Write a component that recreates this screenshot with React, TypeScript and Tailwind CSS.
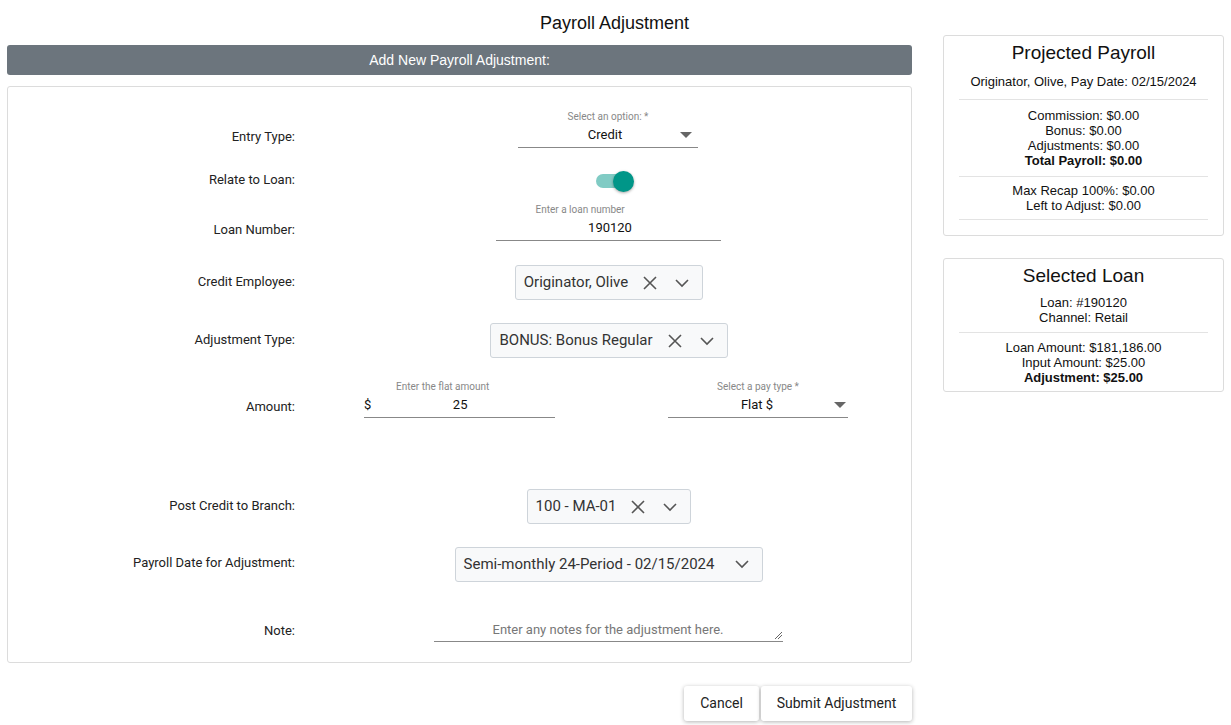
import React from "react";

const X = () => (
  <svg width="16" height="16" viewBox="0 0 16 16" className="shrink-0"><path d="M2 2L14 14M14 2L2 14" stroke="#555" strokeWidth="1.6" /></svg>
);
const Chev = () => (
  <svg width="16" height="16" viewBox="0 0 16 16" className="shrink-0"><path d="M2 5L8 11L14 5" stroke="#555" strokeWidth="1.6" fill="none" /></svg>
);
const Caret = () => (
  <svg width="12" height="6" viewBox="0 0 12 6" className="shrink-0"><path d="M0 0H12L6 6Z" fill="#666" /></svg>
);

function Box({ text, clear = true }: { text: string; clear?: boolean }) {
  return (
    <div className="h-[35px] flex items-center gap-[10px] px-[8px] border border-[#ced4da] rounded-[3px] bg-[#f8f9fa] text-[15px] text-[#333]">
      <span className="mr-[4px]">{text}</span>
      {clear && <X />}
      <span className="ml-[6px] mr-[4px]"><Chev /></span>
    </div>
  );
}

function Row({ label, cls, children, align = "items-center" }: { label: string; cls: string; children: React.ReactNode; align?: string }) {
  return (
    <div className={`flex ${align} ${cls}`}>
      <div className="w-[287px] text-right text-[13px] text-[#222] pb-[2px]">{label}</div>
      <div className="flex-1 ml-[10px] flex justify-center">{children}</div>
    </div>
  );
}

function Line({ children }: { children: React.ReactNode }) {
  return <div className="leading-[15px]">{children}</div>;
}

export default function App() {
  return (
    <div className="w-[1231px] h-[725px] bg-white flex gap-[31px] px-[7px] text-[#111]" style={{ fontFamily: "Roboto, 'Liberation Sans', sans-serif" }}>
      <div className="w-[905px] flex flex-col">
        <div className="h-[45px] flex items-center justify-center pl-[310px] pt-[2px] text-[18px] text-[#111]" style={{ fontFamily: "'Liberation Sans', Arial, sans-serif" }}>
          Payroll Adjustment
        </div>
        <div className="h-[30px] bg-[#6c757d] rounded-[3px] flex items-center justify-center text-white text-[14px]" style={{ fontFamily: "'Liberation Sans', Arial, sans-serif" }}>
          Add New Payroll Adjustment:
        </div>
        <div className="mt-[11px] border border-[#dcdcdc] rounded-[3px] pt-[17px] pb-[20px] flex flex-col">
          <Row label="Entry Type:" cls="h-[44px]" align="items-end">
            <div className="w-[180px] flex flex-col items-center border-b border-[#888]">
              <div className="text-[10px] text-[#888] leading-[13px]">Select an option: *</div>
              <div className="w-full flex items-center h-[24px] pl-[12px] pr-[6px]">
                <span className="flex-1 text-center text-[13px]">Credit</span>
                <Caret />
              </div>
            </div>
          </Row>
          <Row label="Relate to Loan:" cls="h-[44px] mt-[11px]">
            <div className="relative w-[38px] h-[22px] flex items-center ml-[14px]">
              <div className="w-[34px] h-[14px] rounded-full bg-[#80cbc4]" />
              <div className="absolute right-0 w-[21px] h-[21px] rounded-full bg-[#009688] shadow-[0_1px_3px_rgba(0,0,0,0.35)]" />
            </div>
          </Row>
          <Row label="Loan Number:" cls="h-[38px]" align="items-end">
            <div className="w-[225px] flex flex-col border-b border-[#888]">
              <div className="text-[10px] text-[#888] leading-[13px] pl-[40px]">Enter a loan number</div>
              <div className="h-[24px] flex items-center justify-center text-[13px] pl-[4px]">190120</div>
            </div>
          </Row>
          <Row label="Credit Employee:" cls="h-[35px] mt-[24px]">
            <div className="pl-[2px]"><Box text="Originator, Olive" /></div>
          </Row>
          <Row label="Adjustment Type:" cls="h-[35px] mt-[23px]">
            <div className="pl-[2px]"><Box text="BONUS: Bonus Regular" /></div>
          </Row>
          <Row label="Amount:" cls="h-[38px] mt-[22px]" align="items-end">
            <div className="w-full flex justify-between pl-[59px] pr-[63px]">
              <div className="w-[191px] flex flex-col border-b border-[#888]">
                <div className="text-[10px] text-[#888] leading-[13px] pl-[32px]">Enter the flat amount</div>
                <div className="h-[24px] flex items-center text-[13px]">
                  <span>$</span>
                  <span className="flex-1 text-center pr-[6px]">25</span>
                </div>
              </div>
              <div className="w-[180px] flex flex-col items-center border-b border-[#888]">
                <div className="text-[10px] text-[#888] leading-[13px]">Select a pay type *</div>
                <div className="w-full flex items-center h-[24px] pl-[12px] pr-[2px]">
                  <span className="flex-1 text-center text-[13px]">Flat $</span>
                  <Caret />
                </div>
              </div>
            </div>
          </Row>
          <Row label="Post Credit to Branch:" cls="h-[35px] mt-[71px]">
            <div className="pl-[2px]"><Box text="100 - MA-01" /></div>
          </Row>
          <Row label="Payroll Date for Adjustment:" cls="h-[36px] mt-[22px]">
            <div className="pl-[2px]"><Box text="Semi-monthly 24-Period - 02/15/2024" clear={false} /></div>
          </Row>
          <Row label="Note:" cls="h-[22px] mt-[38px]" align="items-end">
            <div className="w-[349px] h-[22px] border-b border-[#888] relative flex items-start justify-center text-[13px] text-[#777]">
              Enter any notes for the adjustment here.
              <svg width="7" height="7" viewBox="0 0 7 7" className="absolute right-[1px] bottom-[2px]"><path d="M7 0L0 7M7 3L3 7" stroke="#666" strokeWidth="1" /></svg>
            </div>
          </Row>
        </div>
        <div className="flex justify-end gap-[2px] mt-[23px]">
          <button className="h-[35px] w-[75px] bg-white rounded-[3px] shadow-[0_1px_4px_rgba(0,0,0,0.3)] text-[14px] text-[#222]">Cancel</button>
          <button className="h-[35px] w-[151px] bg-white rounded-[3px] shadow-[0_1px_4px_rgba(0,0,0,0.3)] text-[14px] text-[#222]">Submit Adjustment</button>
        </div>
      </div>
      <div className="w-[281px] flex flex-col gap-[22px] pt-[35px] text-[13px] text-center" style={{ fontFamily: "'Liberation Sans', Arial, sans-serif" }}>
        <div className="border border-[#dcdcdc] rounded-[3px] px-[15px] pt-[5px] pb-[15px]">
          <div className="text-[19px] leading-[24px]">Projected Payroll</div>
          <div className="py-[7px] border-b border-[#e3e3e3]">Originator, Olive, Pay Date: 02/15/2024</div>
          <div className="py-[8px] border-b border-[#e3e3e3]">
            <Line>Commission: $0.00</Line>
            <Line>Bonus: $0.00</Line>
            <Line>Adjustments: $0.00</Line>
            <Line><b>Total Payroll: $0.00</b></Line>
          </div>
          <div className="py-[6px] border-b border-[#e3e3e3]">
            <Line>Max Recap 100%: $0.00</Line>
            <Line>Left to Adjust: $0.00</Line>
          </div>
        </div>
        <div className="border border-[#dcdcdc] rounded-[3px] px-[15px] pt-[5px] pb-[6px]">
          <div className="text-[19px] leading-[24px]">Selected Loan</div>
          <div className="py-[7px] border-b border-[#e3e3e3]">
            <Line>Loan: #190120</Line>
            <Line>Channel: Retail</Line>
          </div>
          <div className="pt-[7px]">
            <Line>Loan Amount: $181,186.00</Line>
            <Line>Input Amount: $25.00</Line>
            <Line><b>Adjustment: $25.00</b></Line>
          </div>
        </div>
      </div>
    </div>
  );
}
